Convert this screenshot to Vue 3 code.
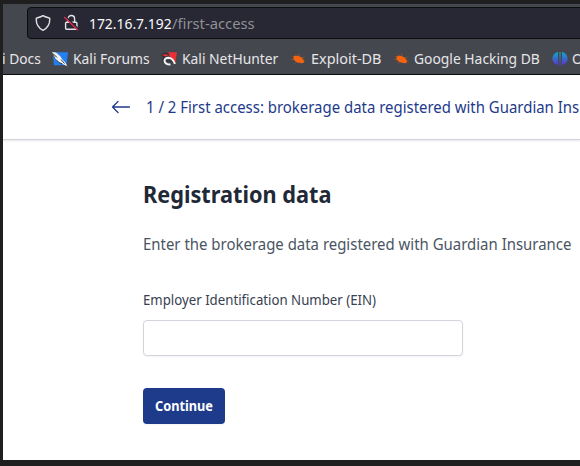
<script setup>
const bookmarks = [
  { label: 'Kali Forums', icon: 'forums' },
  { label: 'Kali NetHunter', icon: 'nethunter' },
  { label: 'Exploit-DB', icon: 'bug' },
  { label: 'Google Hacking DB', icon: 'bug' },
  { label: 'O', icon: 'offsec' },
]
</script>

<template>
  <div class="window">
    <div class="chrome">
      <div class="urlbar">
        <svg class="shield" width="16" height="18" viewBox="0 0 16 18" fill="none" stroke="#e0e0e4" stroke-width="1.4" stroke-linejoin="round">
          <path d="M8 1.6 C6.6 2.7 4.1 3.4 1.9 4 Q1.2 4.2 1.2 5 C1.2 10 3.2 14 8 16.3 C12.8 14 14.8 10 14.8 5 Q14.8 4.2 14.1 4 C11.9 3.4 9.4 2.7 8 1.6Z" />
        </svg>
        <svg class="lock" width="16" height="18" viewBox="0 0 16 18" fill="none">
          <path d="M5 8V4.8a3.3 3.3 0 0 1 6.6 0V8M3.600 8.300h9.300q1 0 1 1v5q0 1-1 1H3.600q-1 0-1-1v-5q0-1 1-1Z" stroke="#e4e4e8" stroke-width="1.4" />
          <path d="M2.500 2.500L15.600 15.200" stroke="#272833" stroke-width="1.600" />
          <path d="M1.200 3L15 16.300" stroke="#e22850" stroke-width="1.400" />
        </svg>
        <span class="url"><span class="host">172.16.7.192</span><span class="path">/first-access</span></span>
      </div>
      <div class="bookmarks">
        <span class="mark docs">i Docs</span>
        <span v-for="(b, i) in bookmarks" :key="b.label" class="mark" :class="'m' + i">
          <svg v-if="b.icon === 'forums'" width="16" height="16" viewBox="0 0 16 16">
            <path d="M3 1.200h13l-1.500 12.800H5Z" fill="#2480f2" />
            <path d="M1 5L11 14.200H2Z" fill="#2480f2" />
            <path d="M0 1L4 1.500 8.500 5.500 10 8 12.500 10.500 15.500 15.200 10.500 13 7 11.500 4 8.500Z" fill="#f4f4f4" />
            <path d="M1 2.500L5 6.500M4 8.500L7 11.500 10.500 13M9 8.500l3.500 4" stroke="#333842" stroke-width="1" fill="none" />
          </svg>
          <svg v-else-if="b.icon === 'nethunter'" width="16" height="16" viewBox="0 0 16 16">
            <path d="M6 1.300h10l-2 11.700L10 7Z" fill="#ed3035" />
            <path d="M0 4.500Q4-.5 8.500 3L6.500 5.500 2.500 9 4.500 13.500 .8 10.500 1.800 6Z" fill="#2f3238" />
            <path d="M1 4Q4.500 2.200 7.500 4.500L4.500 5.500Z" fill="#ed3035" />
            <path d="M14 12.800Q11.500 6.800 7.500 6.800 3.200 7 3.500 10.300 4.300 13.600 9.500 13.600" stroke="#f4f4f4" stroke-width="2" fill="none" />
            <path d="M5.500 10.300Q8 8.300 11 12" stroke="#2f3238" stroke-width="1.300" fill="none" />
          </svg>
          <svg v-else-if="b.icon === 'bug'" width="16" height="16" viewBox="0 0 16 16">
            <path d="M1.500 5.500l3 1M0 8.500l4 0M4 12.500l2-2M7.500 2.500l1 3M10 7l3.500-.8M12 10l2.500 0M10 12l1.500 1.500M4 3.500l1.500 2" stroke="#9b5435" stroke-width=".8" />
            <path d="M2.200 6C4 4.300 7.500 4.500 10.300 6.600 12.500 8.300 13.600 10.200 12.700 11.800 9 12.600 4.500 11.500 3 8.800Z" fill="#f4640f" />
          </svg>
          <svg v-else width="16" height="16" viewBox="0 0 16 16">
            <defs>
              <linearGradient id="violet" gradientUnits="userSpaceOnUse" x1="0" y1="1" x2="0" y2="15">
                <stop offset="0" stop-color="#10a9c4" />
                <stop offset="1" stop-color="#622ad0" />
              </linearGradient>
            </defs>
            <path d="M6 .8v13.200C-1.500 12.500-1.500 3 6 .8ZM10 .8v13.200C17.500 12.500 17.500 3 10 .8ZM7.400 1h1.200v14.500h-1.200Z" fill="url(#violet)" />
          </svg>
          <span class="label">{{ b.label }}</span>
        </span>
      </div>
    </div>

    <header class="steps">
      <svg class="back" width="20" height="16" viewBox="0 0 20 16" fill="none" stroke="#1e3a8a" stroke-width="1.3" stroke-linecap="round" stroke-linejoin="round">
        <path d="M7 2.500L1.500 8 7 13.500M1.500 8h17" />
      </svg>
      <span class="step-title">1 / 2 First access: brokerage data registered with Guardian Ins</span>
    </header>

    <main class="content">
      <h1>Registration data</h1>
      <p>Enter the brokerage data registered with Guardian Insurance</p>
      <label for="ein">Employer Identification Number (EIN)</label>
      <input id="ein" type="text" />
      <button type="button"><span>Continue</span></button>
    </main>
  </div>
</template>

<style>
body { margin: 0; overflow: hidden; }
</style>

<style scoped>
.window {
  box-sizing: border-box;
  width: 580px;
  height: 466px;
  overflow: hidden;
  border: solid #1f1f1f;
  border-width: 4px 0 6px 3px;
  background: #fff;
  font-family: "Noto Sans", sans-serif;
  white-space: nowrap;
}
svg { flex: none; }
.chrome {
  box-sizing: border-box;
  height: 71px;
  padding-top: 3px;
  background: #45474e;
  border-bottom: 1px solid #0c0c0d;
}
.urlbar {
  box-sizing: border-box;
  display: flex;
  align-items: center;
  width: 600px;
  height: 32px;
  margin-left: 24px;
  padding-left: 7px;
  border: 1px solid #0c0c0d;
  border-radius: 4px;
  background: #272833;
}
.lock { margin-left: 12px; }
.url {
  display: flex;
  margin-left: 10px;
  color: #909198;
  font-size: 15px;
  line-height: 30px;
}
.host {
  width: 82.5px;
  color: #fbfbfe;
  transform: scaleX(0.925);
  transform-origin: left;
}
.path {
  transform: scaleX(0.985);
  transform-origin: left;
}
.bookmarks {
  display: flex;
  height: 32px;
  margin-top: 3px;
  color: #e6e6e9;
  font-size: 14.67px;
  line-height: 32px;
}
.mark {
  display: flex;
  flex: none;
  align-items: center;
  gap: 4.5px;
}
.mark svg { margin-top: 1px; }
.label {
  transform: scaleX(0.945);
  transform-origin: left;
}
.docs {
  width: 50px;
  margin-left: -1px;
  transform: scaleX(0.94);
  transform-origin: left;
}
.m0 { width: 109px; }
.m1 { width: 129.5px; }
.m2 { width: 103px; }
.m3 { width: 158px; }
.m2 .label { transform: scaleX(0.985); }
.steps {
  box-sizing: border-box;
  display: flex;
  align-items: center;
  height: 65px;
  padding-left: 108px;
  border-bottom: 1px solid #d1d5db;
  box-shadow: 0 1px 2px #0000001a;
}
.step-title {
  margin-left: 15px;
  color: #1e3a8a;
  font-size: 16px;
  line-height: 24px;
  transform: scaleX(0.933);
  transform-origin: left;
}
.content {
  display: flex;
  flex-direction: column;
  align-items: flex-start;
  padding: 38px 0 0 140px;
}
h1 {
  margin: 0;
  color: #1f2937;
  font-size: 24px;
  font-weight: 700;
  line-height: 32px;
  transform: scaleX(0.905);
  transform-origin: left;
}
p {
  margin: 22px 0 0;
  color: #4b5563;
  font-size: 16px;
  line-height: 24px;
  transform: scaleX(0.934);
  transform-origin: left;
}
label {
  margin-top: 34px;
  color: #374151;
  font-size: 14px;
  line-height: 20px;
  transform: scaleX(0.945);
  transform-origin: left;
}
input {
  box-sizing: border-box;
  width: 320px;
  height: 36px;
  margin: 10px 0 0;
  padding: 0 12px;
  border: 1px solid #d1d5db;
  border-radius: 4px;
  box-shadow: 0 1px 2px #0000000d;
  background: #fff;
}
button {
  width: 82px;
  height: 36px;
  margin: 32px 0 0;
  padding: 0 0 1px;
  border: 0;
  border-radius: 4px;
  background: #1e3a8a;
  box-shadow: 0 1px 2px #0000000d;
  color: #fff;
  font-family: inherit;
  font-size: 14px;
  font-weight: 700;
}
button span {
  display: block;
  transform: scaleX(0.91);
}
</style>
